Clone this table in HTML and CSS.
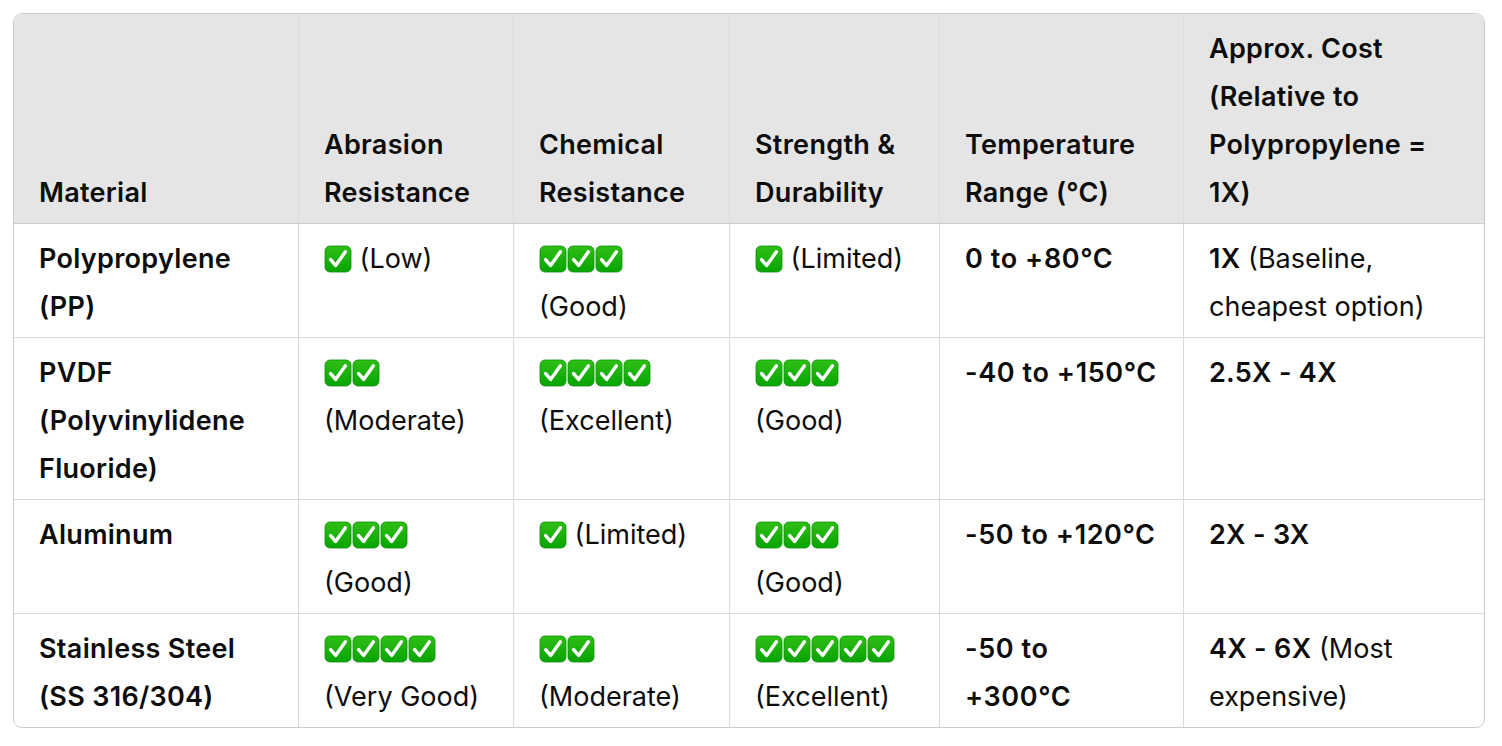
FILE: index.html
```html
<!DOCTYPE html>
<html lang="en">
<head>
<meta charset="utf-8">
<title>Material comparison</title>
<link rel="stylesheet" href="styles.css">
</head>
<body>
<svg class="defs" width="0" height="0" aria-hidden="true">
  <defs>
    <linearGradient id="g" x1="0" y1="0" x2="0" y2="1">
      <stop offset="0" stop-color="#2fbf16"/>
      <stop offset="1" stop-color="#08a403"/>
    </linearGradient>
    <symbol id="chk" viewBox="0 0 28 28">
      <rect x="1" y="1" width="26" height="26" rx="5" fill="url(#g)" stroke="#0a8f06" stroke-width="0.8"/>
      <path d="M6.6 14.6 L11.6 20.4 L21.4 6.8" fill="none" stroke="#fff" stroke-width="3.4" stroke-linecap="round" stroke-linejoin="round"/>
    </symbol>
  </defs>
</svg>
<div class="wrap">
  <table class="cmp">
    <colgroup>
      <col class="c1"><col class="c2"><col class="c3"><col class="c4"><col class="c5"><col class="c6">
    </colgroup>
    <thead>
      <tr>
        <th>Material</th>
        <th>Abrasion Resistance</th>
        <th>Chemical Resistance</th>
        <th>Strength &amp; Durability</th>
        <th>Temperature Range (°C)</th>
        <th>Approx. Cost (Relative to Polypropylene = 1X)</th>
      </tr>
    </thead>
    <tbody>
      <tr>
        <td><strong>Polypropylene (PP)</strong></td>
        <td><span class="ck"><svg><use href="#chk"/></svg></span> (Low)</td>
        <td><span class="ck"><svg><use href="#chk"/></svg><svg><use href="#chk"/></svg><svg><use href="#chk"/></svg></span> (Good)</td>
        <td><span class="ck"><svg><use href="#chk"/></svg></span> (Limited)</td>
        <td class="temp"><strong>0 to +80°C</strong></td>
        <td><strong>1X</strong> (Baseline, cheapest option)</td>
      </tr>
      <tr>
        <td><strong>PVDF (Polyvinylidene Fluoride)</strong></td>
        <td><span class="ck"><svg><use href="#chk"/></svg><svg><use href="#chk"/></svg></span> (Moderate)</td>
        <td><span class="ck"><svg><use href="#chk"/></svg><svg><use href="#chk"/></svg><svg><use href="#chk"/></svg><svg><use href="#chk"/></svg></span> (Excellent)</td>
        <td><span class="ck"><svg><use href="#chk"/></svg><svg><use href="#chk"/></svg><svg><use href="#chk"/></svg></span> (Good)</td>
        <td class="temp"><strong>-40 to +150°C</strong></td>
        <td><strong>2.5X - 4X</strong></td>
      </tr>
      <tr>
        <td><strong>Aluminum</strong></td>
        <td><span class="ck"><svg><use href="#chk"/></svg><svg><use href="#chk"/></svg><svg><use href="#chk"/></svg></span> (Good)</td>
        <td><span class="ck"><svg><use href="#chk"/></svg></span> (Limited)</td>
        <td><span class="ck"><svg><use href="#chk"/></svg><svg><use href="#chk"/></svg><svg><use href="#chk"/></svg></span> (Good)</td>
        <td class="temp"><strong>-50 to +120°C</strong></td>
        <td><strong>2X - 3X</strong></td>
      </tr>
      <tr>
        <td><strong>Stainless Steel (SS 316/304)</strong></td>
        <td><span class="ck"><svg><use href="#chk"/></svg><svg><use href="#chk"/></svg><svg><use href="#chk"/></svg><svg><use href="#chk"/></svg></span> (Very Good)</td>
        <td><span class="ck"><svg><use href="#chk"/></svg><svg><use href="#chk"/></svg></span> (Moderate)</td>
        <td><span class="ck"><svg><use href="#chk"/></svg><svg><use href="#chk"/></svg><svg><use href="#chk"/></svg><svg><use href="#chk"/></svg><svg><use href="#chk"/></svg></span> (Excellent)</td>
        <td class="temp"><strong>-50 to +300°C</strong></td>
        <td><strong>4X - 6X</strong> (Most expensive)</td>
      </tr>
    </tbody>
  </table>
</div>
</body>
</html>
```
FILE: styles.css
```css
html, body {
  margin: 0;
  padding: 0;
  background: #ffffff;
}

body {
  font-family: Inter, "Liberation Sans", sans-serif;
  color: #0d0d0d;
  font-size: 27px;
  line-height: 48px;
}

.defs {
  position: absolute;
  width: 0;
  height: 0;
  overflow: hidden;
}

.wrap {
  padding: 13px 17px 0 13px;
}

.cmp {
  width: 1472px;
  table-layout: fixed;
  border-collapse: separate;
  border-spacing: 0;
  border: 1px solid #cdcdcd;
  border-radius: 9px;
  overflow: hidden;
}

.c1 { width: 285px; }
.c2 { width: 215px; }
.c3 { width: 216px; }
.c4 { width: 210px; }
.c5 { width: 244px; }
.c6 { width: 300px; }

.cmp th,
.cmp td {
  padding: 11px 24px 6px 25px;
  text-align: left;
  border-right: 1px solid #dadada;
  border-bottom: 1px solid #dadada;
}

.cmp th:last-child,
.cmp td:last-child {
  border-right: none;
}

.cmp tbody tr:last-child td {
  border-bottom: none;
}

.cmp th {
  background: #e5e5e5;
  font-weight: 600;
  letter-spacing: 0.3px;
  vertical-align: bottom;
  border-bottom-color: #cdcdcd;
}

.cmp td {
  vertical-align: top;
  font-weight: 400;
}

.cmp strong {
  font-weight: 600;
  letter-spacing: 0.3px;
}

.cmp td.temp {
  padding-right: 26px;
}

.cmp td.temp strong {
  letter-spacing: 0.6px;
}

.ck {
  white-space: nowrap;
}

.ck svg {
  width: 28px;
  height: 28px;
  vertical-align: -5px;
}
```
